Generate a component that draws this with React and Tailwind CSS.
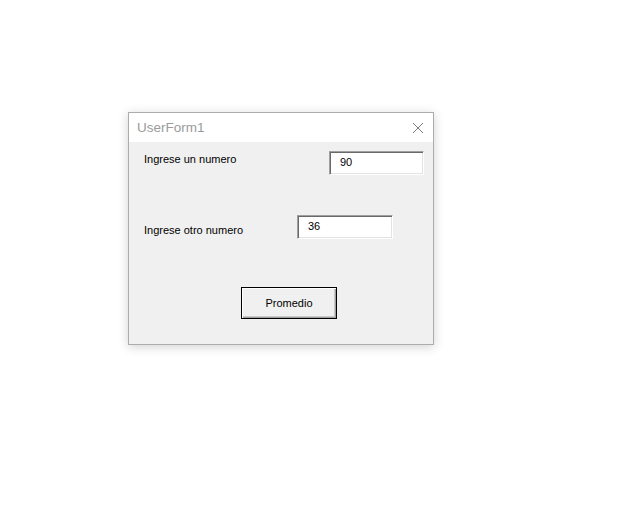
import React from 'react'

const CloseIcon = () => (
  <svg width="12" height="12" viewBox="0 0 12 12" fill="none" xmlns="http://www.w3.org/2000/svg">
    <line x1="1" y1="1" x2="11" y2="11" stroke="#7a7a7a" strokeWidth="1" />
    <line x1="11" y1="1" x2="1" y2="11" stroke="#7a7a7a" strokeWidth="1" />
  </svg>
);

const TextBox = ({ value, width }) => (
  <div
    className={`${width} h-[24px] bg-white border border-t-[#a0a0a0] border-l-[#a0a0a0] border-b-white border-r-white shadow-[inset_1px_1px_0_#696969,inset_-1px_-1px_0_#e3e3e3] pl-[10px] pt-[4px] text-[11px] leading-[13px] text-black`}
  >
    {value}
  </div>
);

const App = () => {
  return (
    <div className="w-[620px] h-[519px] bg-white pt-[112px] pl-[128px] font-['Liberation_Sans',Arial,sans-serif]">
      <div className="w-[306px] h-[233px] border border-[#acacac] bg-[#f0f0f0] shadow-[0_2px_10px_rgba(0,0,0,0.18)] flex flex-col">
        <div className="h-[29px] bg-white flex items-center justify-between pl-[8px] pr-[9px]">
          <span className="text-[13.5px] text-[#9b9b9b] leading-none">UserForm1</span>
          <CloseIcon />
        </div>

        <div className="flex-1 flex flex-col pt-[9px]">
          <div className="flex items-start pl-[15px]">
            <span className="w-[185px] mt-[2px] text-[11px] leading-[13px] text-black">Ingrese un numero</span>
            <TextBox value="90" width="w-[95px]" />
          </div>

          <div className="flex items-start pl-[15px] mt-[40px]">
            <span className="w-[153px] mt-[9px] text-[11px] leading-[13px] text-black">Ingrese otro numero</span>
            <TextBox value="36" width="w-[96px]" />
          </div>

          <div className="pl-[112px] mt-[48px]">
            <button className="w-[96px] h-[32px] border border-black bg-[#f0f0f0] shadow-[inset_1px_1px_0_#ffffff,inset_-1px_-1px_0_#a0a0a0,inset_-2px_-2px_0_#c8c8c8] text-[11px] text-black flex items-center justify-center">
              Promedio
            </button>
          </div>
        </div>
      </div>
    </div>
  );
};

export default App;
